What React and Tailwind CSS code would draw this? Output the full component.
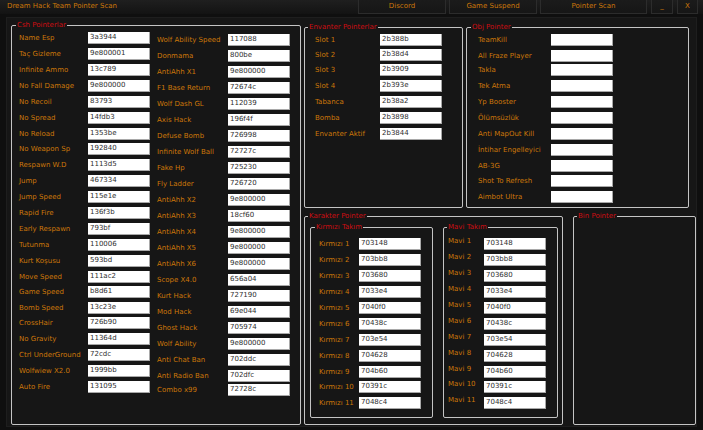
const FONT = 'font-["DejaVu_Sans",sans-serif]';

// rows marked with a third value sit closer to the row above (1 or 2 px)
const csh1 = [
  ['Name Esp', '3a3944'], ['Taç Gizleme', '9e800001'], ['Infinite Ammo', '13c789'], ['No Fall Damage', '9e800000'],
  ['No Recoil', '83793'], ['No Spread', '14fdb3'], ['No Reload', '1353be'], ['No Weapon Sp', '192840', 1],
  ['Respawn W.D', '1113d5'], ['Jump', '467334'], ['Jump Speed', '115e1e'], ['Rapid Fire', '136f3b'],
  ['Early Respawn', '793bf'], ['Tutunma', '110006'], ['Kurt Koşusu', '593bd'], ['Move Speed', '111ac2'],
  ['Game Speed', 'b8d61', 1], ['Bomb Speed', '13c23e'], ['CrossHair', '726b90', 1], ['No Gravity', '11364d'],
  ['Ctrl UnderGround', '72cdc'], ['Wolfwiew X2.0', '1999bb'], ['Auto Fire', '131095'],
];

const csh2 = [
  ['Wolf Ability Speed', '117088'], ['Donmama', '800be'], ['AntiAhh X1', '9e800000'], ['F1 Base Return', '72674c'],
  ['Wolf Dash GL', '112039'], ['Axis Hack', '196f4f'], ['Defuse Bomb', '726998'], ['Infinite Wolf Ball', '72727c'],
  ['Fake Hp', '725230'], ['Fly Ladder', '726720'], ['AntiAhh X2', '9e800000'], ['AntiAhh X3', '18cf60'],
  ['AntiAhh X4', '9e800000'], ['AntiAhh X5', '9e800000'], ['AntiAhh X6', '9e800000'], ['Scope X4.0', '656a04'],
  ['Kurt Hack', '727190'], ['Mod Hack', '69e044'], ['Ghost Hack', '705974'], ['Wolf Ability', '9e800000'],
  ['Anti Chat Ban', '702ddc'], ['Anti Radio Ban', '702dfc'], ['Combo x99', '72728c', 2],
];

const envanter = [
  ['Slot 1', '2b388b'], ['Slot 2', '2b38d4', 1], ['Slot 3', '2b3909', 1], ['Slot 4', '2b393e'],
  ['Tabanca', '2b38a2'], ['Bomba', '2b3898'], ['Envanter Aktif', '2b3844'],
];

const obj = [
  ['TeamKill'], ['All Fraze Player'], ['Takla', '', 2], ['Tek Atma'], ['Yp Booster'], ['Ölümsüzlük'],
  ['Anti MapOut Kill'], ['İntihar Engelleyici'], ['AB-3G'], ['Shot To Refresh', '', 1], ['Aimbot Ultra'],
];

const team = [
  ['703148'], ['703bb8'], ['703680'], ['7033e4'], ['7040f0'], ['70438c'],
  ['703e54'], ['704628'], ['704b60'], ['70391c', 1], ['7048c4'],
];

const PULL = { 1: '-mt-[1px]', 2: '-mt-[2px]' };

function Row({ label, value, labelW, pull, raised }) {
  return (
    <div className={`flex h-[16px] items-center ${PULL[pull] || ''}`}>
      <span
        className={`shrink-0 whitespace-nowrap text-[7px] text-[#cc7709] ${raised ? 'pb-[6px]' : ''}`}
        style={{ width: labelW }}
      >
        {label}
      </span>
      <span className="flex h-[12px] w-[62px] shrink-0 items-center border-r border-b border-[#a8a8a8] bg-white pl-[2px] text-[7px] text-[#2e2e2e]">
        {value}
      </span>
    </div>
  );
}

function Group({ title, className, legend = 'left-[3px]', children }) {
  return (
    <div className={`relative shrink-0 rounded-[2px] border border-[#c4c4c4] ${className}`}>
      <span className={`absolute top-[-6px] bg-[#161616] px-[1px] text-[7px] leading-[10px] whitespace-nowrap text-[#cc0d12] ${legend}`}>
        {title}
      </span>
      {children}
    </div>
  );
}

function TopButton({ label, className }) {
  return (
    <div className={`flex h-[14px] items-center justify-center border-r border-b border-l border-[#2c2c2c] bg-gradient-to-b from-[#1b1b1b] to-[#161616] text-[7px] text-[#cc7709] ${className}`}>
      {label}
    </div>
  );
}

export default function App() {
  return (
    <div className={`flex h-[430px] w-[703px] flex-col overflow-hidden bg-[#0f0f0f] ${FONT}`}>
      <div className="flex h-[14px] shrink-0 items-start bg-gradient-to-b from-[#1f1f1f] to-[#131313]">
        <span className="pl-[7px] text-[7px] leading-[13px] text-[#cc7709]">Dream Hack Team Pointer Scan</span>
        <div className="ml-auto flex gap-[3px] pr-[5px]">
          <TopButton label="Discord" className="w-[88px]" />
          <TopButton label="Game Suspend" className="w-[88px]" />
          <TopButton label="Pointer Scan" className="w-[107px]" />
          <TopButton label="_" className="ml-[1px] w-[22px]" />
          <TopButton label="X" className="ml-[1px] w-[21px]" />
        </div>
      </div>

      <div className="mt-[3px] ml-[6px] flex h-[410px] w-[691px] gap-[3px] border border-[#1e1e1e] bg-[#161616] pt-[7px] pl-[4px]">
        <Group title="Csh Pointerlar" legend="left-[4px]" className="h-[400px] w-[290px]">
          <div className="flex pt-[4px] pl-[7px]">
            <div className="flex w-[138px] flex-col">
              {csh1.map(([l, v, p]) => <Row key={l} label={l} value={v} pull={p} labelW={69} />)}
            </div>
            <div className="flex flex-col pt-[2px]">
              {csh2.map(([l, v, p]) => <Row key={l} label={l} value={v} pull={p} labelW={71} />)}
            </div>
          </div>
        </Group>

        <div className="flex flex-col gap-[8px] pt-[2px]">
          <div className="flex gap-[3px]">
            <Group title="Envanter Pointerlar" className="h-[181px] w-[159px]">
              <div className="pt-[4px] pl-[10px]">
                {envanter.map(([l, v, p]) => <Row key={l} label={l} value={v} pull={p} labelW={65} />)}
              </div>
            </Group>
            <Group title="Obj Pointer" legend="left-[4px]" className="h-[181px] w-[223px]">
              <div className="pt-[4px] pl-[11px]">
                {obj.map(([l, v, p]) => <Row key={l} label={l} value={v} pull={p} labelW={73} />)}
              </div>
            </Group>
          </div>

          <div className="flex gap-[10px]">
            <Group title="Karakter Pointer" className="h-[209px] w-[259px]">
              <div className="flex gap-[10px] pt-[10px] pl-[5px]">
                <Group title="Kırmızı Takım" legend="left-[4px]" className="h-[191px] w-[123px]">
                  <div className="pt-[8px] pl-[8px]">
                    {team.map(([v, p], i) => <Row key={v} label={`Kırmızı ${i + 1}`} value={v} pull={p} labelW={40} />)}
                  </div>
                </Group>
                <Group title="Mavi Takım" className="h-[191px] w-[115px]">
                  <div className="pt-[8px] pl-[4px]">
                    {team.map(([v, p], i) => <Row key={v} label={`Mavi ${i + 1}`} value={v} pull={p} labelW={36} raised />)}
                  </div>
                </Group>
              </div>
            </Group>
            <Group title="Bin Pointer" className="h-[209px] w-[123px]" />
          </div>
        </div>
      </div>
    </div>
  );
}
